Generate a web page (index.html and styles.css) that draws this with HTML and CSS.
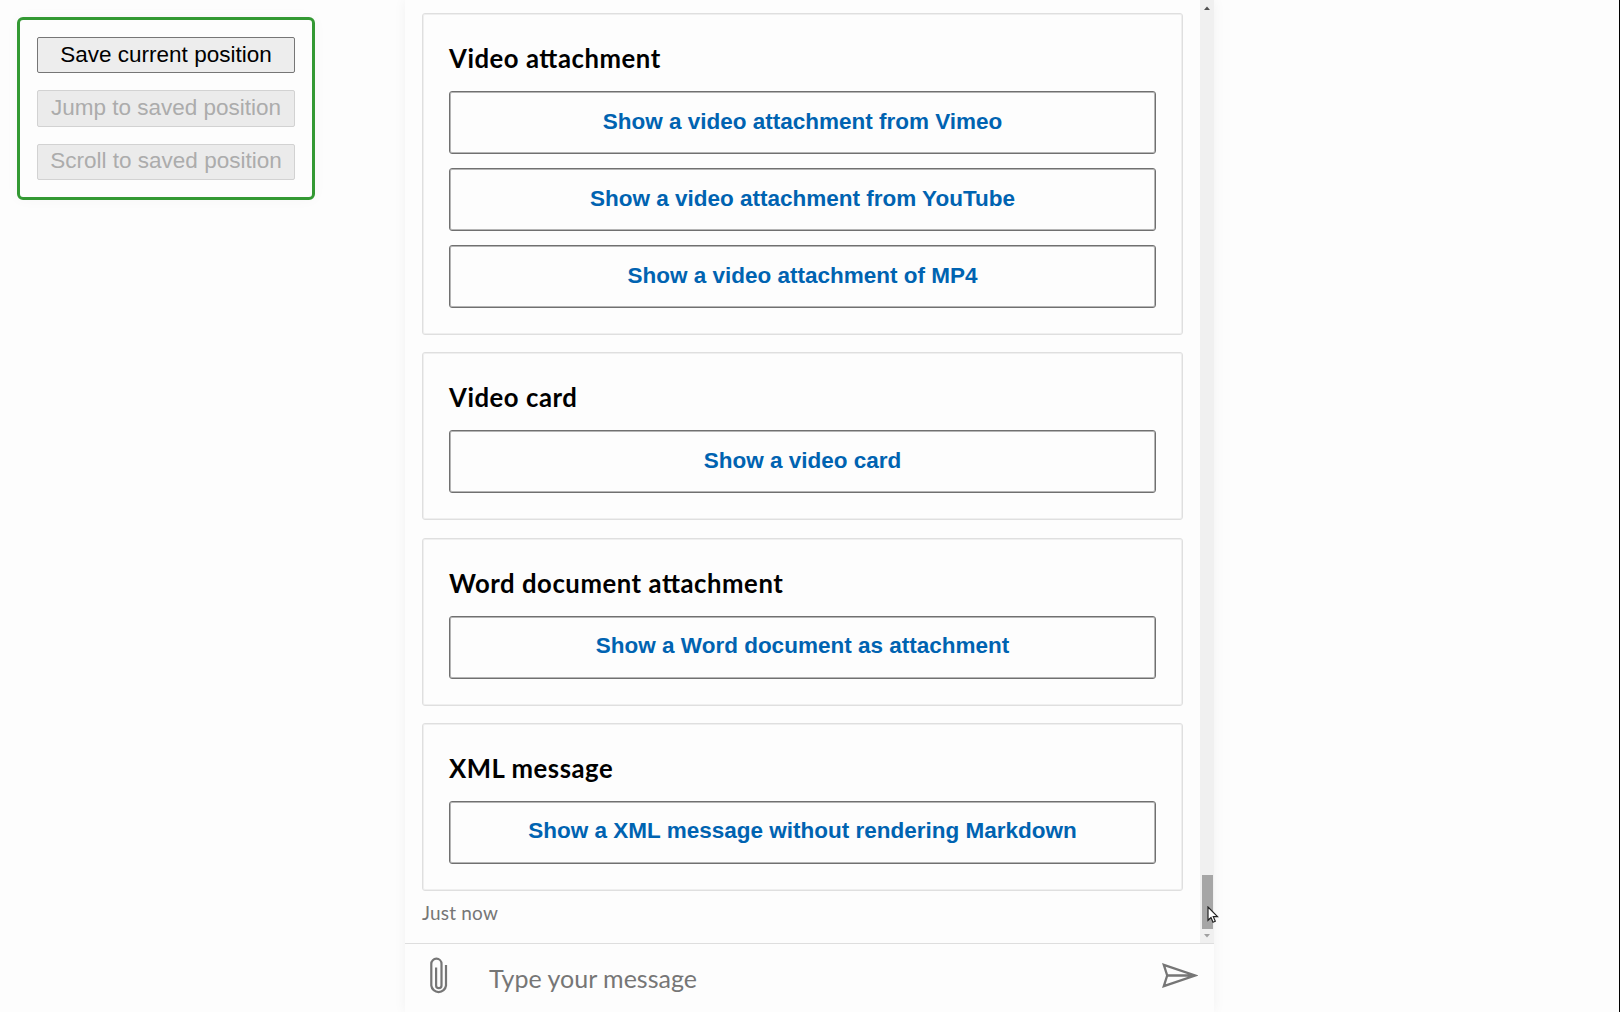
FILE: index.html
```html
<!DOCTYPE html>
<html lang="en">
<head>
<meta charset="utf-8">
<title>Web Chat: Save and restore scroll position</title>
<link rel="stylesheet" href="styles.css">
</head>
<body>
<div class="page">
  <aside class="controls">
    <button class="control" type="button">Save current position</button>
    <button class="control" type="button" disabled>Jump to saved position</button>
    <button class="control" type="button" disabled>Scroll to saved position</button>
  </aside>
  <main class="chat">
    <div class="transcript">
      <div class="messages">
        <section class="card">
          <h2 class="card-title">Video attachment</h2>
          <button class="action" type="button">Show a video attachment from Vimeo</button>
          <button class="action" type="button">Show a video attachment from YouTube</button>
          <button class="action" type="button">Show a video attachment of MP4</button>
        </section>
        <section class="card">
          <h2 class="card-title">Video card</h2>
          <button class="action" type="button">Show a video card</button>
        </section>
        <section class="card">
          <h2 class="card-title">Word document attachment</h2>
          <button class="action" type="button">Show a Word document as attachment</button>
        </section>
        <section class="card">
          <h2 class="card-title">XML message</h2>
          <button class="action" type="button">Show a XML message without rendering Markdown</button>
        </section>
        <div class="timestamp">Just now</div>
      </div>
      <div class="scrollbar">
        <svg class="arrow arrow-up" width="6" height="4" viewBox="0 0 6 4"><path d="M0 4L3 .5L6 4Z" fill="#505050"/></svg>
        <div class="thumb"></div>
        <svg class="arrow" width="6" height="4" viewBox="0 0 6 4"><path d="M0 0L3 3.5L6 0Z" fill="#a0a0a0"/></svg>
      </div>
    </div>
    <footer class="send-box">
      <svg class="clip" width="18" height="38" viewBox="0 0 18 38" fill="none" stroke="#767676" stroke-width="2.2"><path d="M16 8V28.5A7.4 7.4 0 0 1 1.3 28.5V6.8A5.1 5.1 0 0 1 11.5 6.8V28.5A2.7 2.7 0 0 1 6.1 28.5V10.5"/></svg>
      <span class="placeholder">Type your message</span>
      <svg class="send" width="36" height="25" viewBox="0 0 36 25" fill="none" stroke="#767676" stroke-width="2.3"><path d="M1.8 1.8L33 12.5L1.8 23.2L5.2 12.5ZM5.2 12.5H33"/></svg>
    </footer>
  </main>
  <svg class="cursor" width="12" height="18" viewBox="0 0 12 18"><path d="M1 1V14.3L4 11.5L6 16.3L8.3 15.3L6.3 10.7H10.5Z" fill="#fff" stroke="#222" stroke-width="1.2"/></svg>
</div>
</body>
</html>
```
FILE: styles.css
```css
* { box-sizing: border-box; }
body {
  margin: 0;
  background: #fdfdfd;
  font-family: Lato, "Noto Sans", sans-serif;
}
button { margin: 0; padding: 0; font-family: "Liberation Sans", Arial, sans-serif; }
.page {
  position: relative;
  display: flex;
  height: 1012px;
  overflow: hidden;
  border-right: 1px solid #000;
}
.controls {
  display: flex;
  flex: none;
  flex-direction: column;
  gap: 17px;
  width: 298px;
  height: 183px;
  margin: 17px 90px 0 17px;
  padding: 17px;
  border: 3px solid #339933;
  border-radius: 6px;
  box-shadow: 0 0 14px rgba(0, 0, 0, .03);
}
.control {
  height: 36.3px;
  padding-bottom: 1px;
  border: 1px solid #767676;
  border-radius: 2px;
  background: #ededed;
  color: #000;
  font-size: 22.5px;
}
.control:disabled { border-color: #d2d2d2; background: #ebebeb; color: #acacac; }
.chat {
  display: flex;
  flex: none;
  flex-direction: column;
  width: 809px;
  height: 1012px;
  box-shadow: 0 0 12px rgba(0, 0, 0, .05);
}
.transcript { display: flex; height: 943px; }
.messages {
  display: flex;
  flex: 1;
  flex-direction: column;
  gap: 17.2px;
  padding: 13px 17px 0;
}
.card {
  display: flex;
  flex-direction: column;
  gap: 14px;
  padding: 26px;
  border: 1px solid #dfdfdf;
  border-radius: 3px;
  box-shadow: inset 0 0 0 1px #efefef;
}
.card-title {
  height: 37.1px;
  margin: 0;
  color: #000;
  font-size: 25.7px;
  font-weight: 700;
  font-feature-settings: "liga" 1;
  letter-spacing: .55px;
  line-height: 37px;
  white-space: nowrap;
}
.action {
  height: 63px;
  padding-bottom: 2px;
  border: 1px solid #707070;
  border-radius: 3px;
  background: transparent;
  box-shadow: inset 0 0 0 1px #b5b5b5;
  color: #0063b1;
  font-size: 22.5px;
  font-weight: 700;
}
.timestamp {
  margin-top: -7.2px;
  color: #767676;
  font-size: 19px;
  letter-spacing: .2px;
  line-height: 24px;
}
.scrollbar {
  display: flex;
  flex-direction: column;
  align-items: center;
  width: 14px;
  padding: 6px 0 5px;
  background: #f0f0f0;
}
.thumb { width: 11px; height: 54px; margin-bottom: 5px; background: #a6a6a6; }
.arrow-up { margin-bottom: auto; }
.send-box {
  display: flex;
  align-items: center;
  height: 69px;
  padding: 0 16px 0 25px;
  border-top: 1px solid #dedede;
}
.clip { margin: -4px 41px 0 0; }
.placeholder { margin-top: -1px; color: #767676; font-size: 25px; line-height: 32px; }
.send { margin: -5px 0 0 auto; }
.cursor { position: absolute; left: 1207px; top: 906px; }
```
